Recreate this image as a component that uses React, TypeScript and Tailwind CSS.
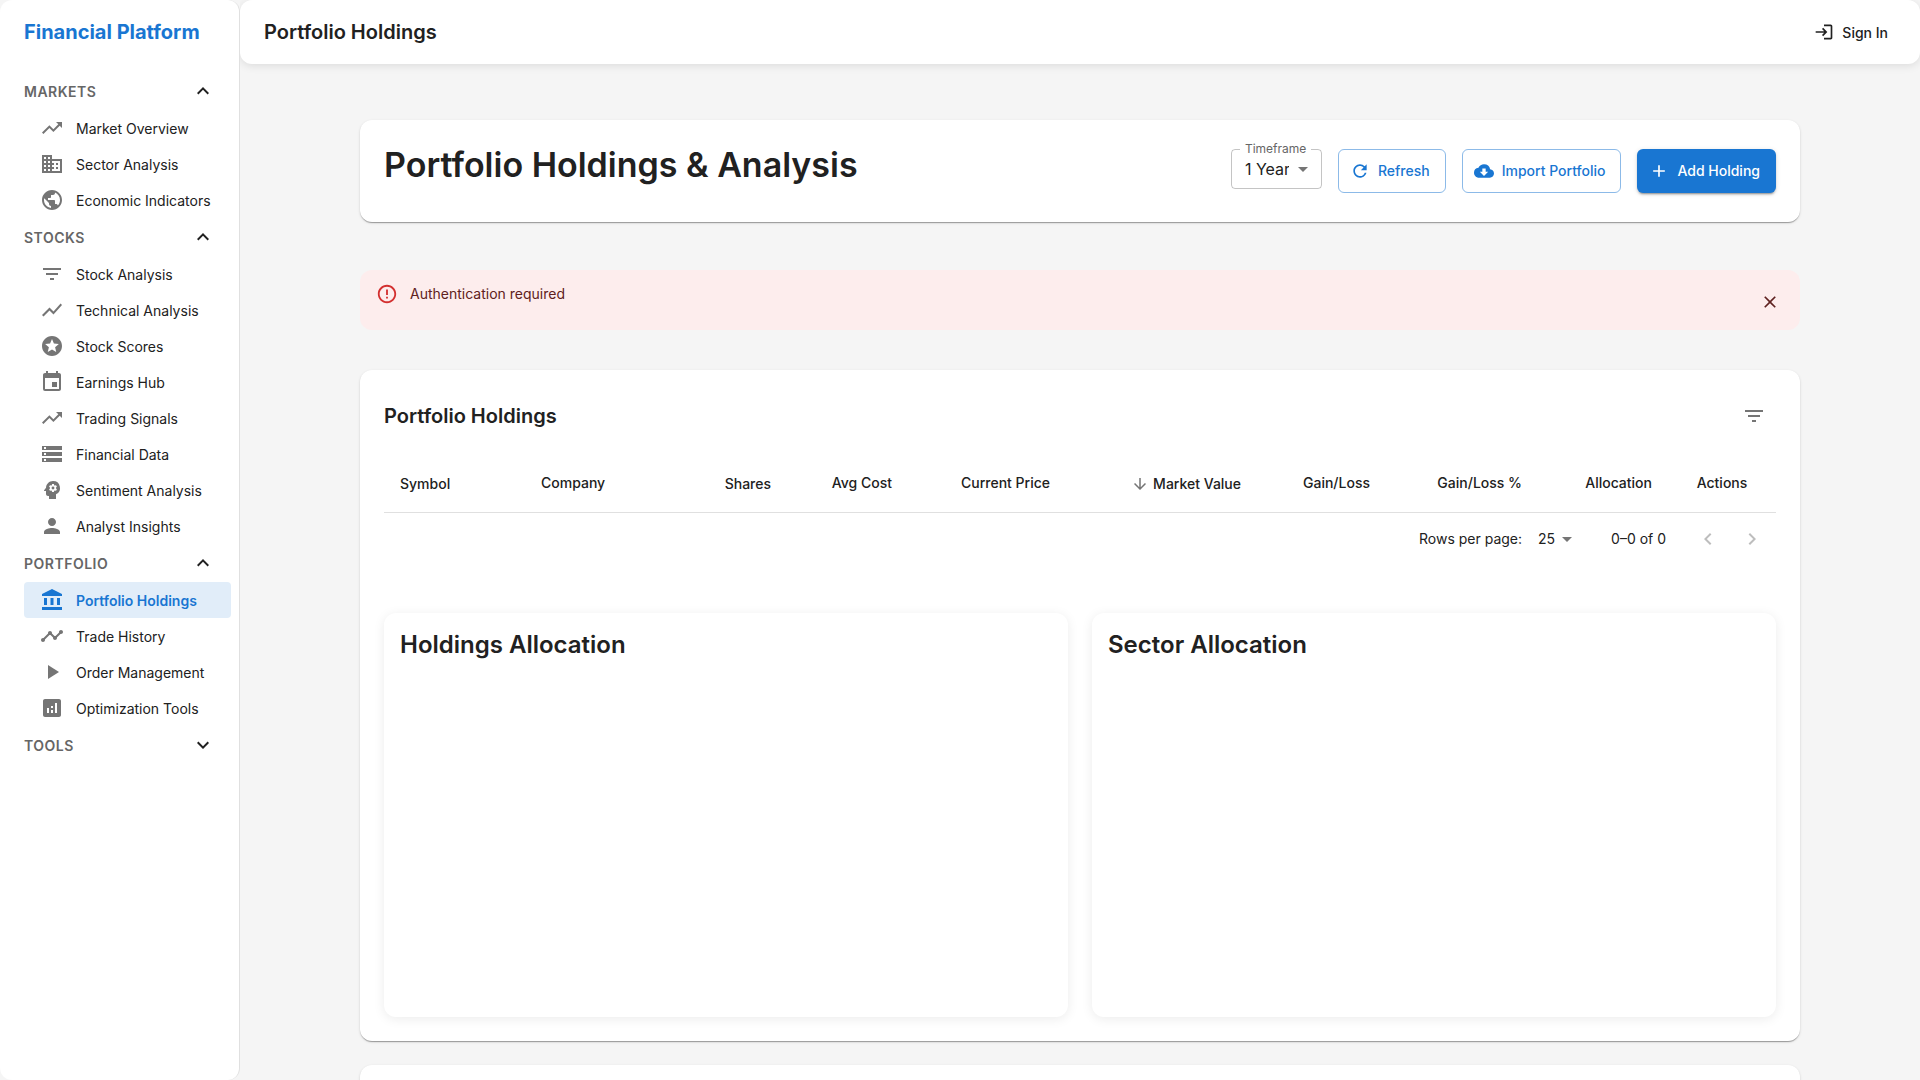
import { useState } from "react";
import type { IconType } from "react-icons";
import {
  MdAccountBalance,
  MdAdd,
  MdAnalytics,
  MdArrowDownward,
  MdArrowDropDown,
  MdBusiness,
  MdClose,
  MdCloudDownload,
  MdErrorOutline,
  MdEvent,
  MdExpandLess,
  MdExpandMore,
  MdFilterList,
  MdKeyboardArrowLeft,
  MdKeyboardArrowRight,
  MdLogin,
  MdPerson,
  MdPlayArrow,
  MdPsychology,
  MdPublic,
  MdRefresh,
  MdShowChart,
  MdStars,
  MdStorage,
  MdTimeline,
  MdTrendingUp,
} from "react-icons/md";

type Item = { label: string; icon: IconType; active?: boolean };
type Section = { title: string; open: boolean; items: Item[] };

const sections: Section[] = [
  {
    title: "Markets",
    open: true,
    items: [
      { label: "Market Overview", icon: MdTrendingUp },
      { label: "Sector Analysis", icon: MdBusiness },
      { label: "Economic Indicators", icon: MdPublic },
    ],
  },
  {
    title: "Stocks",
    open: true,
    items: [
      { label: "Stock Analysis", icon: MdFilterList },
      { label: "Technical Analysis", icon: MdShowChart },
      { label: "Stock Scores", icon: MdStars },
      { label: "Earnings Hub", icon: MdEvent },
      { label: "Trading Signals", icon: MdTrendingUp },
      { label: "Financial Data", icon: MdStorage },
      { label: "Sentiment Analysis", icon: MdPsychology },
      { label: "Analyst Insights", icon: MdPerson },
    ],
  },
  {
    title: "Portfolio",
    open: true,
    items: [
      { label: "Portfolio Holdings", icon: MdAccountBalance, active: true },
      { label: "Trade History", icon: MdTimeline },
      { label: "Order Management", icon: MdPlayArrow },
      { label: "Optimization Tools", icon: MdAnalytics },
    ],
  },
  { title: "Tools", open: false, items: [] },
];

type Column = {
  label: string;
  width: string;
  align: string;
  sortable?: boolean;
  sorted?: boolean;
};

const columns: Column[] = [
  { label: "Symbol", width: "w-[141px]", align: "text-left", sortable: true },
  { label: "Company", width: "w-[141px]", align: "text-left" },
  { label: "Shares", width: "w-[121px]", align: "text-right", sortable: true },
  { label: "Avg Cost", width: "w-[121px]", align: "text-right" },
  { label: "Current Price", width: "w-[158px]", align: "text-right" },
  { label: "Market Value", width: "w-[191px]", align: "text-right", sortable: true, sorted: true },
  { label: "Gain/Loss", width: "w-[129px]", align: "text-right" },
  { label: "Gain/Loss %", width: "w-[152px]", align: "text-right" },
  { label: "Allocation", width: "w-[130px]", align: "text-right" },
  { label: "Actions", width: "w-[108px]", align: "text-center" },
];

const paper =
  "rounded-xl bg-white shadow-[0px_2px_1px_-1px_rgba(0,0,0,0.2),0px_1px_1px_0px_rgba(0,0,0,0.14),0px_1px_3px_0px_rgba(0,0,0,0.12)]";

const outlined =
  "flex h-11 items-center gap-2 rounded-md border border-[#1976d2]/50 pr-[15px] pl-[11px] text-sm font-medium text-[#1976d2]";

function Sidebar() {
  const [open, setOpen] = useState(sections.map((s) => s.open));
  return (
    <aside className="sticky top-0 h-screen w-60 shrink-0 overflow-y-auto rounded-xl border-r border-black/12 bg-white">
      <div className="flex h-16 items-center px-6 text-xl font-bold text-[#1976d2]">
        Financial Platform
      </div>
      <nav className="pt-2" aria-label="Main">
        {sections.map((section, i) => {
          const Chevron = open[i] ? MdExpandLess : MdExpandMore;
          return (
            <section key={section.title}>
              <button
                type="button"
                aria-expanded={open[i]}
                onClick={() => setOpen(open.map((v, j) => (j === i ? !v : v)))}
                className="flex h-[38px] w-full items-center justify-between px-6"
              >
                <span className="pt-0.5 text-sm font-semibold tracking-[0.5px] text-[#666666] uppercase">
                  {section.title}
                </span>
                <Chevron className="size-6" />
              </button>
              {open[i] && (
                <ul className="pr-2 pl-6">
                  {section.items.map(({ label, icon: Icon, active }) => (
                    <li key={label}>
                      <a
                        href="#"
                        aria-current={active ? "page" : undefined}
                        className={
                          active
                            ? "flex h-9 items-center gap-3 rounded bg-[#e1edf9] pl-4 text-sm font-semibold whitespace-nowrap text-[#1976d2]"
                            : "flex h-9 items-center gap-3 rounded pl-4 text-sm whitespace-nowrap"
                        }
                      >
                        <Icon
                          className={active ? "size-6 shrink-0" : "size-6 shrink-0 text-[#757575]"}
                        />
                        <span className="pt-0.5">{label}</span>
                      </a>
                    </li>
                  ))}
                </ul>
              )}
            </section>
          );
        })}
      </nav>
    </aside>
  );
}

function TopBar() {
  return (
    <header className="flex h-16 items-center justify-between rounded-xl bg-white px-6 shadow-[0_2px_8px_rgba(0,0,0,0.1)]">
      <div className="text-xl font-semibold">Portfolio Holdings</div>
      <button type="button" className="flex h-11 items-center gap-2 px-2 text-sm font-medium">
        <MdLogin className="size-5" />
        <span className="pt-0.5">Sign In</span>
      </button>
    </header>
  );
}

function PageHeader() {
  return (
    <section className={`${paper} flex h-[102px] items-start justify-between p-6`}>
      <h1 className="text-[34px] leading-[42px] font-semibold">Portfolio Holdings &amp; Analysis</h1>
      <div className="flex items-start gap-4 pt-[5px]">
        <div className="relative flex h-10 items-center rounded border border-black/23">
          <label
            htmlFor="timeframe"
            className="absolute -top-[9px] left-2 bg-white px-[5px] text-xs leading-4 whitespace-nowrap text-[#666666]"
          >
            Timeframe
          </label>
          <select
            id="timeframe"
            className="h-full w-[89px] appearance-none bg-transparent pr-8 pl-[13px] text-base outline-none"
          >
            <option>1 Year</option>
          </select>
          <MdArrowDropDown className="pointer-events-none absolute right-[6px] size-6 text-[#757575]" />
        </div>
        <button type="button" className={outlined}>
          <MdRefresh className="size-5" />
          Refresh
        </button>
        <button type="button" className={outlined}>
          <MdCloudDownload className="size-5" />
          Import Portfolio
        </button>
        <button
          type="button"
          className="flex h-11 items-center gap-2 rounded-md bg-[#1976d2] pr-4 pl-3 text-sm font-medium text-white shadow-[0px_3px_1px_-2px_rgba(0,0,0,0.2),0px_2px_2px_0px_rgba(0,0,0,0.14),0px_1px_5px_0px_rgba(0,0,0,0.12)]"
        >
          <MdAdd className="size-5" />
          Add Holding
        </button>
      </div>
    </section>
  );
}

function AuthAlert() {
  return (
    <div
      role="alert"
      className="mt-12 flex items-start rounded-xl bg-[#fdeded] px-4 py-[6px] text-[#5f2120]"
    >
      <MdErrorOutline className="mt-[7px] mr-3 size-[22px] text-[#d32f2f]" />
      <p className="mt-2 text-sm leading-5">Authentication required</p>
      <button
        type="button"
        aria-label="Close"
        className="mt-1 -mr-2 ml-auto flex size-11 items-center justify-center"
      >
        <MdClose className="size-5" />
      </button>
    </div>
  );
}

function HoldingsTable() {
  return (
    <table className="w-full table-fixed border-collapse text-sm">
      <thead>
        <tr className="h-[58px] border-b border-[#e0e0e0]">
          {columns.map((c) => (
            <th
              key={c.label}
              scope="col"
              aria-sort={c.sorted ? "descending" : undefined}
              className={`${c.width} ${c.align} px-4 font-medium whitespace-nowrap`}
            >
              {c.sortable ? (
                <button
                  type="button"
                  className="inline-flex h-[22px] items-center gap-1 pt-0.5 align-middle font-medium"
                >
                  {c.sorted && <MdArrowDownward className="size-[18px] text-[#757575]" />}
                  {c.label}
                </button>
              ) : (
                c.label
              )}
            </th>
          ))}
        </tr>
      </thead>
      <tbody />
    </table>
  );
}

function Pagination() {
  return (
    <div className="flex h-[52px] items-center justify-end pr-[2px] text-sm">
      <label htmlFor="rows-per-page">Rows per page:</label>
      <div className="relative mr-8 ml-2 flex items-center">
        <select
          id="rows-per-page"
          className="h-6 w-[49px] appearance-none bg-transparent pr-6 pl-2 text-sm outline-none"
        >
          <option>25</option>
        </select>
        <MdArrowDropDown className="pointer-events-none absolute right-0 size-6 text-[#757575]" />
      </div>
      <span className="mr-5">0–0 of 0</span>
      <button
        type="button"
        disabled
        aria-label="Previous page"
        className="flex size-11 items-center justify-center text-black/26"
      >
        <MdKeyboardArrowLeft className="size-6" />
      </button>
      <button
        type="button"
        disabled
        aria-label="Next page"
        className="flex size-11 items-center justify-center text-black/26"
      >
        <MdKeyboardArrowRight className="size-6" />
      </button>
    </div>
  );
}

function ChartCard({ title }: { title: string }) {
  return (
    <section className="h-[404px] rounded-xl bg-white p-4 shadow-[0_2px_12px_rgba(0,0,0,0.08)]">
      <h3 className="text-2xl font-semibold">{title}</h3>
    </section>
  );
}

export default function App() {
  return (
    <div className="flex h-screen overflow-hidden bg-[#f5f5f5] font-['Inter',sans-serif] text-[#212121]">
      <Sidebar />
      <div className="min-w-0 grow overflow-hidden">
        <TopBar />
        <main className="mx-auto max-w-[1440px] pt-14">
          <PageHeader />
          <AuthAlert />
          <section className={`${paper} mt-10 p-6`}>
            <div className="flex h-11 items-center justify-between">
              <h2 className="text-xl font-semibold">Portfolio Holdings</h2>
              <button
                type="button"
                aria-label="Filter list"
                className="flex size-11 items-center justify-center text-[#757575]"
              >
                <MdFilterList className="size-6" />
              </button>
            </div>
            <div className="mt-4">
              <HoldingsTable />
              <Pagination />
            </div>
            <div className="mt-12 grid grid-cols-2 gap-6">
              <ChartCard title="Holdings Allocation" />
              <ChartCard title="Sector Allocation" />
            </div>
          </section>
          <section className={`${paper} mt-6 h-60`} />
        </main>
      </div>
    </div>
  );
}
